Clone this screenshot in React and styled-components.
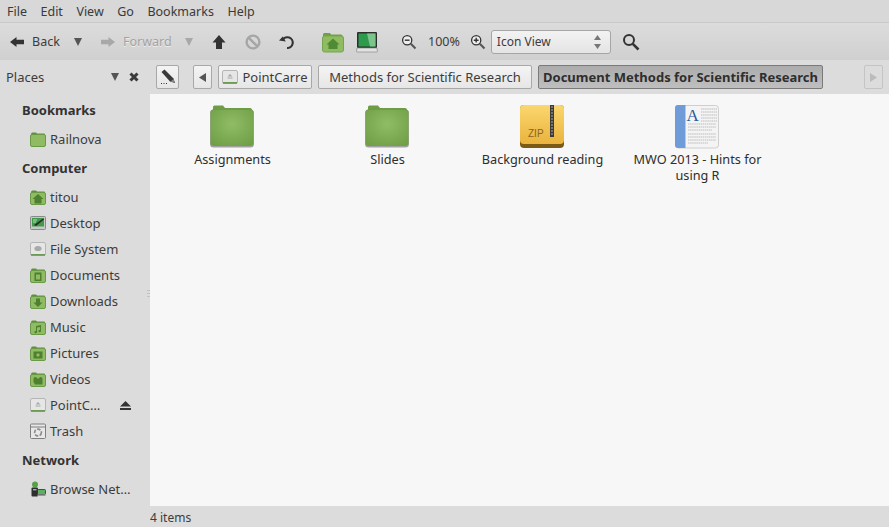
import React from "react";
import styled, { createGlobalStyle } from "styled-components";

const GlobalStyle = createGlobalStyle`
  html, body {
    margin: 0;
    height: 100%;
    overflow: hidden;
  }
  body {
    font-family: "Noto Sans", "Open Sans", sans-serif;
    font-size: 13px;
    color: #3c3c3c;
  }
`;

// icons
const FolderIcon = ({ size = 16, glyph }) => (
  <svg width={size} height={size} viewBox="0 0 16 16">
    <path d="M1 3.5 Q1 1.500 2.500 1.500 H6 L7 2.500 H14 Q15 2.500 15 3.500 V6 H1 Z" fill="#5f8f3c" />
    <rect x="0.5" y="3.500" width="15" height="12" rx="1.500" fill="#8fbb62" stroke="#6a9a46" />
    {glyph && (
      <g fill="#4f8030" stroke="none">
        {glyph === "home" && <path d="M8 5 L13.500 10 H11.500 V14.500 H4.500 V10 H2.500 Z" />}
        {glyph === "doc" && <path fillRule="evenodd" d="M4.500 5.500 H11.500 V14 H4.500 Z M6 7.500 V12.500 H10 V7.500 Z" />}
        {glyph === "down" && <path d="M6 5.500 H10 V9.500 H12.500 L8 14 L3.500 9.500 H6 Z" />}
        {glyph === "music" && <path d="M6 7 L11 6 V12 A1.300 1.100 0 1 1 10 11 V8 L7 8.600 V13 A1.300 1.100 0 1 1 6 12 Z" />}
        {glyph === "pic" && <path fillRule="evenodd" d="M3.500 6.500 H12.500 V13.500 H3.500 Z M8 8.300 A1.700 1.700 0 1 0 8 11.700 A1.700 1.700 0 1 0 8 8.300 Z" />}
        {glyph === "video" && <path d="M3.500 8 A1.700 1.700 0 0 1 7 7.500 H9 A1.700 1.700 0 0 1 12.500 8 V13.500 H5 L3.500 11 Z" />}
      </g>
    )}
  </svg>
);

const DriveIcon = ({ size = 16, dot }) => (
  <svg width={size} height={size} viewBox="0 0 16 16">
    <rect x="0.5" y="1.500" width="15" height="13" rx="1.500" fill="#e6e6e6" stroke="#b5b5b5" />
    <rect x="1" y="13" width="14" height="1.800" fill="#6f9a55" />
    {dot ? (
      <ellipse cx="8" cy="7.500" rx="3.600" ry="2.600" fill="#a9a9a9" />
    ) : (
      <path d="M8 5 L10.500 7.500 H5.500 Z M5.500 8.500 H10.500 V9.400 H5.500 Z" fill="#a8a8a8" />
    )}
  </svg>
);

const DesktopSmall = () => (
  <svg width="16" height="16" viewBox="0 0 16 16">
    <rect x="0.5" y="1.500" width="15" height="13" rx="1" fill="#c8c8c8" stroke="#8a8a8a" />
    <rect x="2" y="3" width="12" height="8.500" fill="#3f9a4c" />
    <path d="M4 10 L13 3.500 L14 4.500 L6 11 Z" fill="#2b2b2b" />
    <path d="M3 5 H7 M3 7 H6" stroke="#b7e0b0" />
  </svg>
);

const TrashIcon = () => (
  <svg width="16" height="16" viewBox="0 0 16 16">
    <rect x="0.5" y="1" width="15" height="14.500" rx="1" fill="#e8e8e8" stroke="#7f7f7f" />
    <path d="M1 4 H15" stroke="#7f7f7f" />
    <circle cx="8" cy="9.500" r="3.400" fill="none" stroke="#8d8d8d" strokeWidth="1.700" strokeDasharray="3.500 1.400" />
  </svg>
);

const NetworkIcon = () => (
  <svg width="16" height="16" viewBox="0 0 16 16">
    <circle cx="5" cy="3.600" r="3" fill="#5aa04c" />
    <rect x="1.500" y="6.500" width="6.500" height="9" rx="1" fill="#2e2e2e" />
    <rect x="3" y="8" width="3.500" height="1.400" fill="#aaa" />
    <rect x="7.500" y="8.500" width="8" height="5" rx="1" fill="#5cb063" stroke="#2e2e2e" strokeWidth=".8" />
    <rect x="7.500" y="13.500" width="8" height="1.500" fill="#999" />
  </svg>
);

const LeftArrow = ({ color = "#333" }) => (
  <svg width="14" height="12" viewBox="0 0 14 12">
    <path d="M0 6 L6.500 1 V3.800 H14 V8.200 H6.500 V11 Z" fill={color} />
  </svg>
);

const RightArrow = ({ color = "#a8a8a8" }) => (
  <svg width="14" height="12" viewBox="0 0 14 12">
    <path d="M14 6 L7.500 1 V3.800 H0 V8.200 H7.500 V11 Z" fill={color} />
  </svg>
);

const UpArrow = () => (
  <svg width="14" height="16" viewBox="0 0 14 16">
    <path d="M7 1 L13.500 8.500 H10 V15 H4 V8.500 H.5 Z" fill="#333" />
  </svg>
);

const StopIcon = () => (
  <svg width="16" height="16" viewBox="0 0 16 16">
    <circle cx="8" cy="8" r="6.400" fill="none" stroke="#a6a6a6" strokeWidth="2.400" />
    <path d="M3.800 3.800 L12.200 12.200" stroke="#a6a6a6" strokeWidth="2.400" />
  </svg>
);

const ReloadIcon = () => (
  <svg width="16" height="16" viewBox="0 0 16 16">
    <path d="M3.600 6 A5.400 5.400 0 1 1 8 14" fill="none" stroke="#333" strokeWidth="2.100" />
    <path d="M0 6.400 L3.800 2.600 L6.800 7.600 Z" fill="#333" />
  </svg>
);

const HomeFolder = () => (
  <svg width="22" height="22" viewBox="0 0 22 22">
    <path d="M1 3.500 Q1 2 2.500 2 H8 L9 3.500 H19 Q20.500 3.500 20.500 5 V8 H1 Z" fill="#6f9f48" />
    <rect x="0.5" y="5" width="21" height="16" rx="2" fill="#8fbc60" stroke="#76a550" />
    <path d="M11 7.500 L17.500 13.500 H15.500 V18 H6.500 V13.500 H4.500 Z" fill="#4f8a34" />
  </svg>
);

const ComputerIcon = () => (
  <svg width="22" height="22" viewBox="0 0 22 22">
    <rect x="1" y="1" width="20" height="16" rx="1" fill="#2a2f2c" />
    <rect x="2.500" y="2.500" width="17" height="13" fill="#2e9a4c" />
    <path d="M11 2.500 H19.500 V15.500 H14 Z" fill="#7cc48b" />
    <path d="M1 17 H21 L21.500 20.500 Q21.500 21 21 21 H1 Q.5 21 .5 20.500 Z" fill="#e2e2e2" stroke="#8a8a8a" strokeWidth=".7" />
  </svg>
);

const ZoomOut = () => (
  <svg width="16" height="16" viewBox="0 0 16 16">
    <circle cx="6.200" cy="6.200" r="4.600" fill="#eee" stroke="#333" strokeWidth="1.300" />
    <path d="M3.800 6.200 H8.600" stroke="#333" strokeWidth="1.400" />
    <path d="M9.800 9.800 L14.500 14.500" stroke="#555" strokeWidth="2" />
  </svg>
);

const ZoomIn = () => (
  <svg width="16" height="16" viewBox="0 0 16 16">
    <circle cx="6.200" cy="6.200" r="4.600" fill="#eee" stroke="#333" strokeWidth="1.300" />
    <path d="M3.800 6.200 H8.600 M6.200 3.800 V8.600" stroke="#333" strokeWidth="1.400" />
    <path d="M9.800 9.800 L14.500 14.500" stroke="#555" strokeWidth="2" />
  </svg>
);

const SearchIcon = () => (
  <svg width="18" height="18" viewBox="0 0 18 18">
    <circle cx="7" cy="7" r="5" fill="none" stroke="#333" strokeWidth="2" />
    <path d="M10.800 10.800 L16.500 16.500" stroke="#333" strokeWidth="2.600" />
  </svg>
);

const EditIcon = () => (
  <svg width="16" height="16" viewBox="0 0 16 16">
    <path d="M1.500 3 L4.500 0.500 L13.500 9.500 L15 14 L10 12.500 Z" fill="#3a3a3a" />
    <path d="M10.500 12.500 L13.500 10 L14.500 13.500 Z" fill="#8a8a8a" />
    <path d="M1 14.500 H2 M3.500 14.500 H4.500 M6 14.500 H7" stroke="#333" />
  </svg>
);

const CloseIcon = () => (
  <svg width="10" height="10" viewBox="0 0 10 10">
    <path d="M1.500 1.500 L8.500 8.500 M8.500 1.500 L1.500 8.500" stroke="#3a3a3a" strokeWidth="3" />
  </svg>
);

const BigFolder = () => (
  <svg width="48" height="48" viewBox="2 0 48 48">
    <defs>
      <radialGradient id="fold" cx="50%" cy="40%" r="70%">
        <stop offset="0" stopColor="#90bc66" />
        <stop offset="1" stopColor="#6f9f47" />
      </radialGradient>
    </defs>
    <path d="M6 5 Q6 3.500 7.500 3.500 H16 L18 6 H43 Q45 6 45 8 V12 H6 Z" fill="#6e9c47" />
    <rect x="3" y="7.500" width="44" height="38" rx="3.500" fill="#5c5c5c" opacity=".55" />
    <rect x="3.500" y="7.500" width="43" height="36.500" rx="3" fill="url(#fold)" />
  </svg>
);

const ZipIcon = () => (
  <svg width="48" height="48" viewBox="2 0 48 48">
    <defs>
      <linearGradient id="zip" x1="0" y1="0" x2="0" y2="1">
        <stop offset="0" stopColor="#fbd76f" />
        <stop offset="1" stopColor="#eab33d" />
      </linearGradient>
    </defs>
    <rect x="3" y="3" width="44" height="43" rx="4" fill="#7a5a14" />
    <rect x="3" y="3" width="44" height="39" rx="4" fill="url(#zip)" />
    <rect x="33" y="3" width="4" height="32" fill="#3b3b3b" />
    <path d="M34 5 H36 M34 8 H36 M34 11 H36 M34 14 H36 M34 17 H36 M34 20 H36 M34 23 H36 M34 26 H36 M34 29 H36 M34 32 H36" stroke="#aaa" />
    <text x="11" y="35" fontSize="10" fontFamily="Liberation Sans, sans-serif" fill="#8a6420">ZIP</text>
  </svg>
);

const DocIcon = () => (
  <svg width="48" height="48" viewBox="2 0 48 48">
    <rect x="3.500" y="3.500" width="43" height="42.500" rx="3" fill="#f4f4f4" stroke="#cfcfcf" />
    <path d="M3 6 Q3 3 6 3 H13.500 V46 H6 Q3 46 3 43 Z" fill="#6f9bd8" />
    <text x="14.500" y="18.500" fontSize="17" fontFamily="Liberation Serif, serif" fill="#2d5a9c">A</text>
    <path d="M29 7 H45 M29 10 H45 M29 13 H45 M29 16 H45 M29 19 H45 M16 22 H44 M16 25 H44 M16 28 H40 M16 32 H44 M16 35 H44 M16 38 H44 M16 41 H36" stroke="#a4a4a4" strokeWidth=".7" strokeDasharray="1.500 .6" />
  </svg>
);

const menus = ["File", "Edit", "View", "Go", "Bookmarks", "Help"];

const places = [
  { heading: "Bookmarks", items: [{ label: "Railnova", icon: <FolderIcon /> }] },
  {
    heading: "Computer",
    items: [
      { label: "titou", icon: <FolderIcon glyph="home" /> },
      { label: "Desktop", icon: <DesktopSmall /> },
      { label: "File System", icon: <DriveIcon dot /> },
      { label: "Documents", icon: <FolderIcon glyph="doc" /> },
      { label: "Downloads", icon: <FolderIcon glyph="down" /> },
      { label: "Music", icon: <FolderIcon glyph="music" /> },
      { label: "Pictures", icon: <FolderIcon glyph="pic" /> },
      { label: "Videos", icon: <FolderIcon glyph="video" /> },
      { label: "PointC…", icon: <DriveIcon />, eject: true },
      { label: "Trash", icon: <TrashIcon /> },
    ],
  },
  { heading: "Network", items: [{ label: "Browse Net…", icon: <NetworkIcon /> }] },
];

const files = [
  { name: "Assignments", icon: <BigFolder /> },
  { name: "Slides", icon: <BigFolder /> },
  { name: "Background reading", icon: <ZipIcon /> },
  { name: "MWO 2013 - Hints for using R", icon: <DocIcon /> },
];

const App = () => {
  return (
    <Window>
      <GlobalStyle />
      <MenuBar>
        {menus.map((m) => (
          <MenuItem key={m}>{m}</MenuItem>
        ))}
      </MenuBar>
      <Toolbar>
        <NavButton $width={64}>
          <LeftArrow />
          <span>Back</span>
        </NavButton>
        <DropArrow />
        <NavButton $disabled $width={84} $offset={19}>
          <RightArrow />
          <span>Forward</span>
        </NavButton>
        <DropArrow $disabled />
        <ToolIcon $left={19}><UpArrow /></ToolIcon>
        <ToolIcon $left={19}><StopIcon /></ToolIcon>
        <ToolIcon $left={18}><ReloadIcon /></ToolIcon>
        <ToolIcon $left={27}><HomeFolder /></ToolIcon>
        <ToolIcon $left={12}><ComputerIcon /></ToolIcon>
        <ToolIcon $left={23}><ZoomOut /></ToolIcon>
        <ZoomLabel>100%</ZoomLabel>
        <ToolIcon $left={10}><ZoomIn /></ToolIcon>
        <ViewSelect>
          Icon View
          <Spinner>
            <svg width="7" height="14" viewBox="0 0 7 14">
              <path d="M3.500 0 L7 5 H0 Z M3.500 14 L0 9 H7 Z" fill="#777" />
            </svg>
          </Spinner>
        </ViewSelect>
        <ToolIcon $left={11}><SearchIcon /></ToolIcon>
      </Toolbar>
      <Main>
        <Sidebar>
          <PlacesHeader>
            <span>Places</span>
            <PlacesActions>
              <SmallTriangle />
              <CloseIcon />
            </PlacesActions>
          </PlacesHeader>
          {places.map((group) => (
            <div key={group.heading}>
              <GroupHeading>{group.heading}</GroupHeading>
              {group.items.map((item) => (
                <PlaceRow key={item.label}>
                  {item.icon}
                  <PlaceLabel>{item.label}</PlaceLabel>
                  {item.eject && (
                    <Eject>
                      <svg width="11" height="9" viewBox="0 0 11 9">
                        <path d="M5.500 0 L11 5.500 H0 Z M0 7 H11 V9 H0 Z" fill="#333" />
                      </svg>
                    </Eject>
                  )}
                </PlaceRow>
              ))}
            </div>
          ))}
          <PaneGrip />
        </Sidebar>
        <Content>
          <PathBar>
            <PathButton $width={23} $gapRight={8}><EditIcon /></PathButton>
            <PathButton $width={19}>
              <svg width="7" height="9" viewBox="0 0 7 9"><path d="M0 4.500 L7 0 V9 Z" fill="#555" /></svg>
            </PathButton>
            <PathButton $width={94}>
              <DriveIcon />
              <span>PointCarre</span>
            </PathButton>
            <PathButton $width={214}>Methods for Scientific Research</PathButton>
            <PathButton $active $width={285}>Document Methods for Scientific Research</PathButton>
            <PathSpacer />
            <PathButton $disabled $width={19}>
              <svg width="7" height="9" viewBox="0 0 7 9"><path d="M7 4.500 L0 0 V9 Z" fill="#bbb" /></svg>
            </PathButton>
          </PathBar>
          <IconGrid>
            {files.map((f) => (
              <FileItem key={f.name}>
                {f.icon}
                <FileName>{f.name}</FileName>
              </FileItem>
            ))}
          </IconGrid>
          <StatusBar>4 items</StatusBar>
        </Content>
      </Main>
    </Window>
  );
};

const Window = styled.div`
  width: 889px;
  height: 527px;
  display: flex;
  flex-direction: column;
  background: #dcdcdc;
  overflow: hidden;
`;
const MenuBar = styled.div`
  height: 22px;
  display: flex;
  align-items: center;
  gap: 13.5px;
  padding-left: 7px;
  background: #d8d8d8;
  font-size: 12.5px;
`;
const MenuItem = styled.div`
  color: #3a3a3a;
`;
const Toolbar = styled.div`
  height: 38px;
  display: flex;
  align-items: center;
  padding-left: 10px;
  background: linear-gradient(#dcdcdc, #d0d0d0);
  border-top: 1px solid #c8c8c8;
  box-sizing: border-box;
`;
const NavButton = styled.div`
  width: ${(p) => p.$width}px;
  margin-left: ${(p) => p.$offset || 0}px;
  flex: none;
  display: flex;
  align-items: center;
  gap: 8px;
  font-size: 12.5px;
  color: ${(p) => (p.$disabled ? "#a2a2a2" : "#3c3c3c")};
  text-shadow: ${(p) => (p.$disabled ? "0 1px #eee" : "none")};
`;
const DropArrow = styled.div`
  width: 0;
  height: 0;
  border-left: 4px solid transparent;
  border-right: 4px solid transparent;
  border-top: 8px solid ${(p) => (p.$disabled ? "#a8a8a8" : "#555")};
`;
const ToolIcon = styled.div`
  display: flex;
  align-items: center;
  margin-left: ${(p) => p.$left}px;
`;
const ZoomLabel = styled.div`
  margin-left: 11px;
  font-size: 12.5px;
`;
const ViewSelect = styled.div`
  width: 120px;
  height: 24px;
  margin-left: 5px;
  box-sizing: border-box;
  padding: 0 9px 0 5px;
  display: flex;
  align-items: center;
  justify-content: space-between;
  font-size: 12px;
  background: linear-gradient(#f3f3f3, #e4e4e4);
  border: 1px solid #a6a6a6;
  border-radius: 3px;
`;
const Spinner = styled.div`
  display: flex;
`;
const Main = styled.div`
  flex: 1;
  display: flex;
  min-height: 0;
`;
const Sidebar = styled.div`
  position: relative;
  width: 150px;
  flex: none;
  background: #dcdcdc;
`;
const PaneGrip = styled.div`
  position: absolute;
  right: 0;
  top: 230px;
  width: 3px;
  height: 7px;
  background: repeating-linear-gradient(#c2c2c2 0 1px, transparent 1px 3px);
`;
const PlacesHeader = styled.div`
  height: 34px;
  display: flex;
  align-items: center;
  justify-content: space-between;
  padding: 0 11px 0 6px;
  font-size: 13px;
`;
const PlacesActions = styled.div`
  display: flex;
  align-items: center;
  gap: 10px;
`;
const SmallTriangle = styled.div`
  width: 0;
  height: 0;
  border-left: 4px solid transparent;
  border-right: 4px solid transparent;
  border-top: 8px solid #555;
`;
const GroupHeading = styled.div`
  height: 32px;
  line-height: 32px;
  padding-left: 22px;
  font-weight: 700;
  font-size: 13px;
  color: #333;
`;
const PlaceRow = styled.div`
  height: 26px;
  display: flex;
  align-items: center;
  gap: 4px;
  padding-left: 30px;
  padding-right: 19px;
`;
const PlaceLabel = styled.span`
  flex: 1;
  white-space: nowrap;
  font-size: 13px;
`;
const Eject = styled.span`
  display: flex;
`;
const Content = styled.div`
  flex: 1;
  min-width: 0;
  display: flex;
  flex-direction: column;
`;
const PathBar = styled.div`
  height: 34px;
  flex: none;
  display: flex;
  align-items: center;
  gap: 6px;
  padding: 0 6px;
  box-sizing: border-box;
`;
const PathButton = styled.div`
  width: ${(p) => p.$width}px;
  height: 24px;
  flex: none;
  box-sizing: border-box;
  margin-right: ${(p) => p.$gapRight || 0}px;
  display: flex;
  align-items: center;
  justify-content: center;
  gap: 4px;
  white-space: nowrap;
  font-size: 13px;
  border-radius: 2px;
  font-weight: ${(p) => (p.$active ? 700 : 400)};
  color: ${(p) => (p.$active ? "#2e2e2e" : "#3c3c3c")};
  border: 1px solid ${(p) => (p.$active ? "#7a7a7a" : p.$disabled ? "#c4c4c4" : "#a8a8a8")};
  background: ${(p) =>
    p.$active
      ? "linear-gradient(#acacac, #bfbfbf)"
      : p.$disabled
      ? "#dcdcdc"
      : "linear-gradient(#f4f4f4, #e6e6e6)"};
`;
const PathSpacer = styled.div`
  flex: 1;
`;
const IconGrid = styled.div`
  flex: 1;
  display: flex;
  align-items: flex-start;
  padding: 8px 0 0 5px;
  background: #f7f7f7;
`;
const FileItem = styled.div`
  width: 155px;
  display: flex;
  flex-direction: column;
  align-items: center;
`;
const FileName = styled.div`
  width: 132px;
  margin-top: 1px;
  line-height: 16px;
  text-align: center;
  font-size: 12.7px;
  color: #2e2e2e;
`;
const StatusBar = styled.div`
  height: 21px;
  flex: none;
  box-sizing: border-box;
  padding-top: 2px;
  display: flex;
  align-items: center;
  font-size: 12px;
  background: #dcdcdc;
`;

export default App;
